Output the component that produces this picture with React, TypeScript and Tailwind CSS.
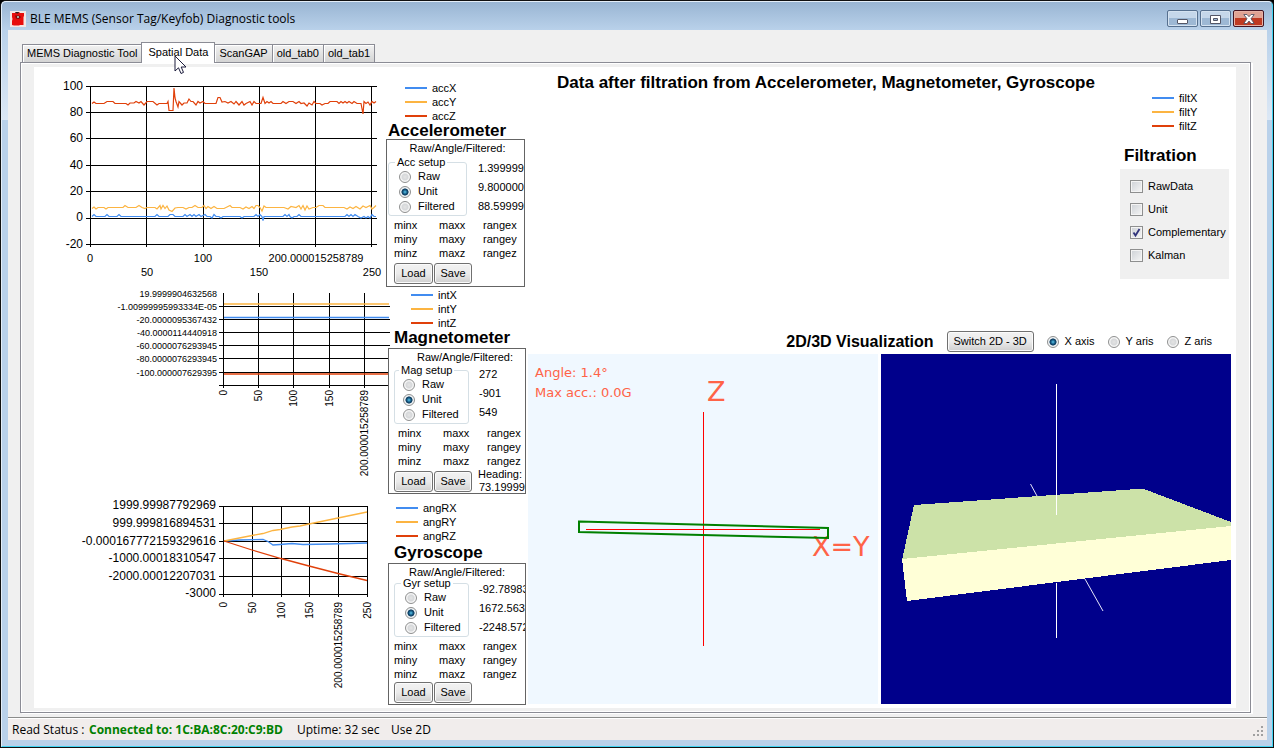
import React, { useState } from 'react'

const SERIES_COLORS = ['#418cf0', '#fcb441', '#e0400a']

const tabs = ['MEMS Diagnostic Tool', 'Spatial Data', 'ScanGAP', 'old_tab0', 'old_tab1']

const accZ =
  '92,103.5 94,102 96,103.5 104,103.5 107,101.5 113,101.5 115,103.5 126,103.5 128,105 130,103 134,103 136,101.5 139,103 141,101.5 144,105 147,101.5 153,101.5 157,105 159,103.5 167,103.5 168,101.5 169,110.5 173,110.5 174,88 175,98 176,101.5 178,107 179,101.5 182,105 184,103 187,103 189,99 191,101.5 193,101.5 196,105 198,101.5 200,103 203,101.5 205,103.5 216,103.5 218,97.5 220,97.5 222,102 225,101.5 228,103 231,101.5 234,104 236,101.5 239,105 242,101.5 244,105 246,103.5 250,101.5 252,105 254,101.5 256,103.5 261,103.5 263,97.5 265,103.5 267,101.5 269,103 271,101.5 273,103.5 281,103.5 283,101.5 286,103.5 289,101.5 293,101.5 296,103.5 299,101.5 301,103.5 304,103 307,106 309,103 312,105 314,101.5 316,103.5 320,103.5 322,105 325,103.5 328,103.5 330,101.5 337,101.5 339,103.5 341,101.5 343,103 345,101.5 347,103 349,101.5 352,103.5 354,101.5 357,103.5 361,103.5 363,114 364,101.5 366,103.5 368,102 370,105 372,101.5 374,103 376,101.5'

const accY =
  '92,208.5 94,207 96,209 98,207.5 104,207.5 106,209 108,207.5 123,207.5 125,205.5 128,207.5 136,207.5 139,205.5 142,207.5 145,208.5 147,207.5 155,207.5 157,209 160,205.5 161,209 163,205.5 165,208.5 167,206 169,210 172,211.5 175,208 178,207.5 183,207.5 186,209 189,207.5 192,207.5 195,205.5 198,207.5 202,207.5 204,205.5 206,208.5 208,206.5 211,208.5 214,206.5 217,208.5 224,208.5 227,207 230,205.5 232,207.5 240,207.5 243,209 246,207 249,208.5 252,206.5 254,208.5 256,205.5 258,205.5 260,207.5 262,211 264,206 266,207.5 284,207.5 288,209 291,206.5 296,207.5 299,205.5 301,209 303,205.5 305,210 307,206 309,209 313,207.5 316,207.5 319,205.5 323,205.5 325,207.5 344,207.5 347,209 350,207 353,208.5 356,206.5 360,209 363,206 366,207.5 370,205.5 372,209 374,207.5 376,205.5'

const accX =
  '92,216.5 94,214.5 96,216.5 105,216.5 107,214.5 109,216.5 117,216.5 119,214.5 121,216.5 155,216.5 157,214.5 159,216.5 168,216.5 170,214.5 173,214.5 175,216.5 183,216.5 185,214.5 187,216.5 190,214.5 192,216.5 194,214.5 196,216.5 199,214.5 201,216.5 205,214.5 207,216.5 210,216.5 212,218 214,214.5 216,216.5 219,216.5 221,218 223,216.5 240,216.5 242,218 244,216.5 254,216.5 256,214.5 258,216.5 260,214.5 262,216.5 263,220.5 264,216.5 283,216.5 285,214.5 287,216.5 289,214.5 290,216.5 292,218 294,216.5 297,216.5 299,214.5 301,216.5 345,216.5 347,214.5 349,216.5 351,214.5 353,216.5 355,214.5 358,216.5 361,218 364,216.5 366,218 368,216.5 370,218 372,214.5 374,216.5 376,216.5'

type Label = [number, string]

type ChartProps = {
  viewBox: string
  className: string
  xs: number[]
  ys: number[]
  left: number
  right: number
  top: number
  bottom: number
  yLabels: Label[]
  yLabelX: number
  yFont: number
  children: React.ReactNode
}

// Grid lines plus the y axis labels, the series and x labels come in as children
const Chart = ({ viewBox, className, xs, ys, left, right, top, bottom, yLabels, yLabelX, yFont, children }: ChartProps) => (
  <svg viewBox={viewBox} className={`shrink-0 overflow-visible w-[352px] ${className}`}>
    <g stroke="#000" shapeRendering="crispEdges">
      {xs.map((x) => (
        <line key={x} x1={x} x2={x} y1={top} y2={bottom} />
      ))}
      {ys.map((y) => (
        <line key={y} x1={left} x2={right} y1={y} y2={y} />
      ))}
    </g>
    {yLabels.map(([y, text]) => (
      <text key={text} x={yLabelX} y={y} fontSize={yFont} textAnchor="end" dominantBaseline="central">
        {text}
      </text>
    ))}
    {children}
  </svg>
)

const RotatedLabels = ({ labels, y }: { labels: Label[]; y: number }) => (
  <>
    {labels.map(([x, text]) => (
      <text key={text} fontSize={10} textAnchor="end" transform={`translate(${x + 4} ${y}) rotate(-90)`}>
        {text}
      </text>
    ))}
  </>
)

const AccChart = () => (
  <Chart
    viewBox="34 67 352 220"
    className="h-[220px]"
    xs={[90.5, 146.5, 203.5, 259.5, 315.5, 371.5]}
    ys={[86.5, 112.5, 138.5, 165.5, 191.5, 218.5, 244.5]}
    left={86}
    right={377}
    top={86}
    bottom={247}
    yLabelX={83}
    yFont={12}
    yLabels={[[86, '100'], [112, '80'], [138, '60'], [165, '40'], [191, '20'], [217, '0'], [244, '-20']]}
  >
    <g fill="none" strokeWidth="1.2">
      <polyline points={accX} stroke={SERIES_COLORS[0]} />
      <polyline points={accY} stroke={SERIES_COLORS[1]} />
      <polyline points={accZ} stroke={SERIES_COLORS[2]} />
    </g>
    <g fontSize="11" textAnchor="middle">
      <text x="90" y="262">0</text>
      <text x="147" y="276">50</text>
      <text x="203" y="262">100</text>
      <text x="259" y="276">150</text>
      <text x="316" y="262">200.000015258789</text>
      <text x="372" y="276">250</text>
    </g>
  </Chart>
)

const MagChart = () => (
  <Chart
    viewBox="34 287 352 207"
    className="h-[207px]"
    xs={[223.5, 258.5, 293.5, 329.5, 364.5]}
    ys={[306.5, 319.5, 332.5, 345.5, 358.5, 372.5, 385.5]}
    left={219}
    right={390}
    top={293}
    bottom={388}
    yLabelX={217}
    yFont={9}
    yLabels={[
      [294, '19.9999904632568'],
      [307, '-1.00999995993334E-05'],
      [320, '-20.0000095367432'],
      [333, '-40.0000114440918'],
      [346, '-60.0000076293945'],
      [359, '-80.0000076293945'],
      [373, '-100.000007629395'],
    ]}
  >
    <g fill="none">
      <path d="M224 304H389" stroke={SERIES_COLORS[1]} strokeWidth="1.5" />
      <path d="M224 317.5H389" stroke={SERIES_COLORS[0]} strokeWidth="1.5" />
      <path d="M224 374H389" stroke={SERIES_COLORS[2]} strokeWidth="1.5" />
    </g>
    <RotatedLabels y={390} labels={[[223, '0'], [258, '50'], [293, '100'], [329, '150'], [364, '200.000015258789']]} />
  </Chart>
)

const GyrChart = () => (
  <Chart
    viewBox="34 494 352 211"
    className="h-[211px]"
    xs={[223.5, 252.5, 281.5, 309.5, 338.5, 367.5]}
    ys={[506.5, 523.5, 541.5, 558.5, 576.5, 594.5]}
    left={219}
    right={368}
    top={506}
    bottom={597}
    yLabelX={216}
    yFont={12}
    yLabels={[
      [505, '1999.99987792969'],
      [523, '999.999816894531'],
      [541, '-0.000167772159329616'],
      [558, '-1000.00018310547'],
      [576, '-2000.00012207031'],
      [593, '-3000'],
    ]}
  >
    <g fill="none" strokeWidth="1.3">
      <polyline
        points="224,541 240,540 263,539.5 268,541.5 273,545 280,544.5 292,543.5 303,544.5 330,544 350,543.5 367,543"
        stroke={SERIES_COLORS[0]}
      />
      <polyline
        points="224,541 252,535.5 263,533.5 273,530.5 280,529.5 292,527 300,526 309,524 338,518 367,512"
        stroke={SERIES_COLORS[1]}
      />
      <polyline points="224,541 252,550 281,558.5 309,566 338,573.5 367,580.5" stroke={SERIES_COLORS[2]} />
    </g>
    <RotatedLabels
      y={602}
      labels={[[223, '0'], [252, '50'], [281, '100'], [309, '150'], [338, '200.000015258789'], [367, '250']]}
    />
  </Chart>
)

const Legend = ({ names, className = '' }: { names: string[]; className?: string }) => (
  <ul className={className}>
    {names.map((name, i) => (
      <li key={name} className="flex h-3.5 items-center gap-[5px] text-[11px] leading-[14px]">
        <svg width="22" height="2" viewBox="0 0 22 2">
          <rect width="22" height="2" fill={SERIES_COLORS[i]} />
        </svg>
        {name}
      </li>
    ))}
  </ul>
)

const WinButton = ({ children, className = '' }: { children: React.ReactNode; className?: string }) => (
  <button
    type="button"
    className={`rounded-[3px] border border-[#707070] bg-linear-to-b from-[#f2f2f2] via-[#ebebeb] via-50% to-[#cfcfcf] text-center text-[11px] shadow-[inset_0_0_0_1px_#fbfbfb] ${className}`}
  >
    {children}
  </button>
)

const Radio = ({ name, label, defaultChecked, className = '' }: { name: string; label: string; defaultChecked?: boolean; className?: string }) => (
  <label className={`flex h-[15px] items-center text-[11px] leading-[15px] ${className}`}>
    <input
      type="radio"
      name={name}
      defaultChecked={defaultChecked}
      className="size-3 shrink-0 appearance-none rounded-full border border-[#8e8f8f] bg-[radial-gradient(circle,#e4e4e4_0,#d6d8da_40%,#f6f6f6_60%)] checked:bg-[radial-gradient(circle_at_50%_50%,#5ac8ee_0,#14567f_30%,#0e3a5c_45%,#f0f4f6_55%)]"
    />
    {label}
  </label>
)

type Sensor = {
  id: string
  title: string
  group: string
  legend: string[]
  values: string[]
  heading?: string
  chart: React.ReactNode
  rowClass: string
  legendClass: string
  titleClass: string
  boxClass: string
  captionClass: string
  groupClass: string
  valuesClass: string
  gridClass: string
  buttonsClass: string
}

const sensors: Sensor[] = [
  {
    id: 'acc',
    title: 'Accelerometer',
    group: 'Acc setup',
    legend: ['accX', 'accY', 'accZ'],
    values: ['1.399999', '9.800000', '88.59999'],
    chart: <AccChart />,
    rowClass: 'pt-3.5',
    legendClass: 'pl-[19px]',
    titleClass: 'h-4 pl-0.5',
    boxClass: 'h-[148px] w-[139px]',
    captionClass: 'h-4 pl-1',
    groupClass: 'ml-px w-[79px] pl-2.5',
    valuesClass: 'pt-[3px] pl-[11px]',
    gridClass: 'pl-[7px]',
    buttonsClass: 'pl-[7px]',
  },
  {
    id: 'mag',
    title: 'Magnetometer',
    group: 'Mag setup',
    legend: ['intX', 'intY', 'intZ'],
    values: ['272', '-901', '549'],
    heading: '73.19999',
    chart: <MagChart />,
    rowClass: 'pt-px',
    legendClass: 'pl-[25px]',
    titleClass: 'h-[18px] pl-2',
    boxClass: 'ml-0.5 h-[146px] w-[138px]',
    captionClass: 'h-[15px] pl-4',
    groupClass: 'ml-[5px] w-[75px] pl-2',
    valuesClass: 'pt-px pl-[10px]',
    gridClass: 'pl-[9px]',
    buttonsClass: 'pl-[5px]',
  },
  {
    id: 'gyr',
    title: 'Gyroscope',
    group: 'Gyr setup',
    legend: ['angRX', 'angRY', 'angRZ'],
    values: ['-92.78983', '1672.563', '-2248.572'],
    chart: <GyrChart />,
    rowClass: 'pt-[7px]',
    legendClass: 'pl-2.5',
    titleClass: 'h-5 pl-2 pt-0.5',
    boxClass: 'ml-0.5 h-[142px] w-[138px]',
    captionClass: 'h-[13px]',
    groupClass: 'ml-[5px] w-[75px] pl-2.5',
    valuesClass: 'pt-[3px] pl-[10px]',
    gridClass: 'pl-[5px]',
    buttonsClass: 'pl-[5px]',
  },
]

const SensorRow = ({ sensor }: { sensor: Sensor }) => (
  <section className="flex">
    {sensor.chart}
    <div className={`w-[140px] ${sensor.rowClass}`}>
      <Legend names={sensor.legend} className={sensor.legendClass} />
      <h2 className={`text-[17px] leading-4 font-bold ${sensor.titleClass}`}>{sensor.title}</h2>
      <div className={`flex flex-col overflow-hidden border border-[#646464] bg-white text-[11px] ${sensor.boxClass}`}>
        <p className={`shrink-0 text-center leading-4 ${sensor.captionClass}`}>Raw/Angle/Filtered:</p>
        <div className="flex">
          <fieldset className={`h-[60px] shrink-0 rounded-[3px] border border-[#d5dfe5] pt-px ${sensor.groupClass}`}>
            <legend className="-ml-1 px-0.5 leading-3">{sensor.group}</legend>
            {['Raw', 'Unit', 'Filtered'].map((mode) => (
              <Radio key={mode} name={sensor.id} label={mode} defaultChecked={mode === 'Unit'} className="gap-[7px]" />
            ))}
          </fieldset>
          <div className={`flex h-[60px] flex-col leading-[19px] ${sensor.valuesClass}`}>
            {sensor.values.map((value) => (
              <output key={value}>{value}</output>
            ))}
          </div>
        </div>
        <div className={`grid shrink-0 grid-cols-[45px_44px_auto] pt-0.5 leading-[14px] ${sensor.gridClass}`}>
          {['x', 'y', 'z'].map((axis) => (
            <React.Fragment key={axis}>
              <span>min{axis}</span>
              <span>max{axis}</span>
              <span>range{axis}</span>
            </React.Fragment>
          ))}
        </div>
        <div className={`flex flex-1 items-center gap-px ${sensor.buttonsClass}`}>
          <WinButton className="h-[21px] w-[39px] shrink-0">Load</WinButton>
          <WinButton className="h-[21px] w-[38px] shrink-0">Save</WinButton>
          {sensor.heading && (
            <div className="pl-[5px] leading-[13px]">
              Heading:
              <output className="block pl-px">{sensor.heading}</output>
            </div>
          )}
        </div>
      </div>
    </div>
  </section>
)

const FilterCheckbox = ({ label, defaultChecked }: { label: string; defaultChecked?: boolean }) => (
  <label className="flex h-[23px] items-center gap-[5px] text-[11px]">
    <span className="relative flex">
      <input
        type="checkbox"
        defaultChecked={defaultChecked}
        className="peer size-[13px] appearance-none border border-[#8e8f8f] bg-linear-to-br from-[#cdd1d6] to-[#f6f6f6] shadow-[inset_0_0_0_1px_#f4f4f4]"
      />
      <svg viewBox="0 0 13 13" className="pointer-events-none absolute inset-0 hidden size-[13px] peer-checked:block">
        <path d="M3.5 6.5L5.5 9.5L9.5 3" fill="none" stroke="#31347c" strokeWidth="1.8" />
      </svg>
    </span>
    {label}
  </label>
)

const View2D = () => (
  <svg viewBox="0 0 350 350" className="w-full bg-[#f0f8ff]">
    <g fill="#ff6347" fontFamily='"DejaVu Sans", Verdana, sans-serif'>
      <text x="7" y="23" fontSize="13">Angle: 1.4°</text>
      <text x="7" y="43" fontSize="13">Max acc.: 0.0G</text>
      <text x="179" y="47" fontSize="27">Z</text>
      <text x="284" y="202" fontSize="27">X=Y</text>
    </g>
    <path d="M175.5 58V292M58 175.5H292" stroke="#f00" fill="none" shapeRendering="crispEdges" />
    <path d="M51 167.500L300 174V184L51 178Z" stroke="#008000" strokeWidth="2" fill="none" />
  </svg>
)

const View3D = () => (
  <svg viewBox="0 0 350 350" className="w-full bg-[#00008b]">
    <path d="M149.500 130L156 142M204 225L222 257" stroke="#e6e6fa" />
    <g shapeRendering="crispEdges">
      <path d="M33 151L256 135H263L350 168V173L21 206Z" fill="#cce2a8" />
      <path d="M21 205L350 172V206L26 247Z" fill="#ffffd7" />
      <path d="M175.500 30V161M175.500 229V284" stroke="#fff" />
    </g>
  </svg>
)

const AppIcon = () => (
  <svg width="16" height="16" viewBox="0 0 16 16" className="bg-[#f4e6e4]">
    <path d="M2 2H5L6 1H9L10 2H14V5L13.500 6V14H10L9 14.500H4L2 14V10L2.500 8L2 6Z" fill="#e80c0c" />
    <path d="M5 4.500H9L11 6L9 8L6 7.500Z" fill="#7a0a0a" />
    <circle cx="8" cy="6" r="1" fill="#b9d8d0" />
    <path d="M5 2L6 1H9L8 2.500Z" fill="#222" />
  </svg>
)

const Cursor = () => (
  <svg width="13" height="20" viewBox="0 0 13 20" className="pointer-events-none absolute top-3 left-8 z-10">
    <path d="M1 1V16L4.500 12.800L7 18.500L9.500 17.400L7.200 12H12Z" fill="#fff" stroke="#1c1c3c" strokeWidth="1" />
  </svg>
)

const TitleBar = () => (
  <header className="flex h-[28px] items-start pr-[3px] pl-0.5">
    <div className="flex flex-1 items-center gap-1 pt-[9px]">
      <AppIcon />
      <h1 className="font-['Open_Sans','Noto_Sans',sans-serif] text-[12px] leading-4">
        BLE MEMS (Sensor Tag/Keyfob) Diagnostic tools
      </h1>
    </div>
    <div className="flex gap-0.5 pt-2">
      <button
        type="button"
        aria-label="Minimize"
        className="flex h-[17px] w-[31px] items-center justify-center rounded-[2px] border border-[#56708f] bg-linear-to-b from-[#c5d7ea] from-50% to-[#9db8d4] to-50% shadow-[inset_0_0_0_1px_#d4e2f0]"
      >
        <svg width="12" height="12" viewBox="0 0 12 12">
          <rect x="0.500" y="6.500" width="10" height="4" rx="0.500" fill="#fff" stroke="#535666" />
        </svg>
      </button>
      <button
        type="button"
        aria-label="Maximize"
        className="flex h-[17px] w-[31px] items-center justify-center rounded-[2px] border border-[#56708f] bg-linear-to-b from-[#c5d7ea] from-50% to-[#9db8d4] to-50% shadow-[inset_0_0_0_1px_#d4e2f0]"
      >
        <svg width="12" height="12" viewBox="0 0 12 12">
          <path d="M0.500 2.500H10.500V10.500H0.500Z M3.500 5.500V7.500H7.500V5.500Z" fillRule="evenodd" fill="#fff" stroke="#535666" />
        </svg>
      </button>
      <button
        type="button"
        aria-label="Close"
        className="flex h-[17px] w-[31px] items-center justify-center rounded-[2px] border border-[#431422] bg-linear-to-b from-[#e0a293] from-50% to-[#bf3a22] to-50% shadow-[inset_0_0_0_1px_#e7b2a6]"
      >
        <svg width="12" height="12" viewBox="0 0 12 12">
          <path
            d="M0.800 1.500H4L6 3.700L8 1.500H11.200L8 5.800L11.200 10.500H8L6 8L4 10.500H0.800L4 5.800Z"
            fill="#fff"
            stroke="#535666"
            strokeWidth="0.900"
          />
        </svg>
      </button>
    </div>
  </header>
)

const App = () => {
  const [activeTab, setActiveTab] = useState('Spatial Data')

  return (
    <div className="bg-black">
      <div className="flex min-h-screen flex-col rounded-t-[6px] border border-[#101010] bg-[linear-gradient(#98b4d2_0,#b9d1ea_29px,#dce8f5_119px,#b9d1ea_119px)] font-['Liberation_Sans',Arial,sans-serif] text-black">
        <div className="flex flex-1 flex-col rounded-t-[5px] border border-t-[#e4eef8] border-r-[#3fd3f2] border-b-[#3fd3f2] border-l-[#e4eef8] pr-[5px] pb-1.5 pl-1.5">
          <TitleBar />

          <main className="flex flex-1 flex-col bg-[#f0f0f0] pt-3">
            {/* Tab strip */}
            <div role="tablist" className="flex h-5 items-end pl-3.5">
              {tabs.map((tab) => (
                <button
                  key={tab}
                  type="button"
                  role="tab"
                  aria-selected={tab === activeTab}
                  onClick={() => setActiveTab(tab)}
                  className={
                    tab === activeTab
                      ? 'relative z-10 -mr-px -mb-px h-[21px] border border-b-0 border-[#8b8c95] bg-white px-1.5 pb-px text-[11px]'
                      : '-mr-px h-[18px] border border-b-0 border-[#8b8c95] bg-linear-to-b from-[#f2f2f2] to-[#d4d4d4] px-1 text-[11px] shadow-[inset_1px_1px_0_#fff]'
                  }
                >
                  {tab}
                  {tab === 'Spatial Data' && <Cursor />}
                </button>
              ))}
            </div>

            {/* Tab page */}
            <div className="mr-4 ml-3 flex flex-1 border border-[#8b8c95] bg-white p-px shadow-[2px_1px_0_#fff]">
              <div className="flex flex-1 bg-[#f0f0f0] pt-[3px] pr-[13px] pb-[3px] pl-3">
                <div className="flex flex-1 bg-white pb-[3px]">
                  <div className="flex shrink-0 flex-col">
                    {sensors.map((sensor) => (
                      <SensorRow key={sensor.id} sensor={sensor} />
                    ))}
                  </div>

                  <div className="ml-0.5 flex min-w-0 flex-1 flex-col justify-between pr-[5px] pb-px">
                    <div className="flex">
                      <h2 className="flex-1 pt-2 pl-1 text-center text-[17px] leading-4 font-bold">
                        Data after filtration from Accelerometer, Magnetometer, Gyroscope
                      </h2>
                      <div className="mr-0.5 w-[109px] pt-6">
                        <Legend names={['filtX', 'filtY', 'filtZ']} className="pl-8" />
                        <h2 className="mt-3.5 mb-1 pl-1 text-[17px] leading-[18px] font-bold">Filtration</h2>
                        <div className="bg-[#f0f0f0] pt-1.5 pb-3 pl-2.5">
                          <FilterCheckbox label="RawData" />
                          <FilterCheckbox label="Unit" />
                          <FilterCheckbox label="Complementary" defaultChecked />
                          <FilterCheckbox label="Kalman" />
                        </div>
                      </div>
                    </div>

                    <div>
                      <div className="flex h-[25px] items-center justify-end gap-[13px] pr-[19px]">
                        <h2 className="text-base leading-4 font-bold">2D/3D Visualization</h2>
                        <WinButton className="h-[21px] w-[87px]">Switch 2D - 3D</WinButton>
                        <Radio name="axis" label="X axis" defaultChecked className="gap-1.5" />
                        <Radio name="axis" label="Y aris" className="gap-1.5" />
                        <Radio name="axis" label="Z aris" className="gap-1.5" />
                      </div>
                      <div className="grid grid-cols-2 gap-[3px]">
                        <View2D />
                        <View3D />
                      </div>
                    </div>
                  </div>
                </div>
              </div>
            </div>

            {/* Status bar */}
            <footer className="mt-1 flex h-[23px] items-center border-t border-[#8b8c8b] bg-[#f1edec] pt-0.5 pl-1 font-['Open_Sans','Noto_Sans',sans-serif] text-[12px] shadow-[inset_0_1px_0_#fff]">
              <span className="w-[77px]">Read Status :</span>
              <span className="w-[208px] font-bold text-[#008000]">Connected to: 1C:BA:8C:20:C9:BD</span>
              <span className="w-[94px]">Uptime: 32 sec</span>
              <span>Use 2D</span>
              <svg width="12" height="12" viewBox="0 0 12 12" className="mt-auto mr-0.5 mb-0.5 ml-auto">
                <path d="M8 0h2v2h-2zM4 4h2v2h-2zM8 4h2v2h-2zM0 8h2v2h-2zM4 8h2v2h-2zM8 8h2v2h-2z" fill="#a0a0a0" />
              </svg>
            </footer>
          </main>
        </div>
      </div>
    </div>
  )
}

export default App
